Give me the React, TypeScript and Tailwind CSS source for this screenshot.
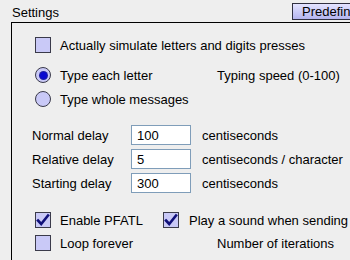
import React from "react";

function Box({ checked }: { checked?: boolean }) {
  return (
    <span className="relative inline-flex h-4 w-4 shrink-0 items-center justify-center border border-[#3a3a4a] bg-[#c9c9f7]">
      {checked && (
        <svg width="14" height="14" viewBox="0 0 14 14" className="absolute">
          <path d="M2 7.5 L5.2 11 L12 2.5" fill="none" stroke="#10107a" strokeWidth="2.6" strokeLinecap="square" />
        </svg>
      )}
    </span>
  );
}

function Radio({ checked }: { checked?: boolean }) {
  return (
    <span className="inline-flex h-4 w-4 shrink-0 items-center justify-center rounded-full border border-[#3a3a4a] bg-[#c9c9f7]">
      {checked && <span className="h-[7px] w-[7px] rounded-full bg-[#0a0ad0] ring-1 ring-[#2020a0]" />}
    </span>
  );
}

function DelayRow({ label, value, unit, cls }: { label: string; value: string; unit: string; cls: string }) {
  return (
    <div className={"flex h-5 items-center whitespace-nowrap " + cls}>
      <span className="w-[119px] shrink-0 pl-5">{label}</span>
      <span className="flex h-5 w-[60px] shrink-0 items-center border border-[#7f9db9] bg-white pl-[5px]">{value}</span>
      <span className="pl-[11px]">{unit}</span>
    </div>
  );
}

export default function App() {
  return (
    <div
      className="relative h-[260px] w-[350px] overflow-hidden whitespace-nowrap bg-[#eeeeee] text-[13px] leading-none text-black"
      style={{ fontFamily: '"Liberation Sans", Arial, sans-serif' }}
    >
      {/* header */}
      <div className="flex h-[22px] items-start">
        <span className="pl-3 pt-[6px]">Settings</span>
        <div className="ml-auto mr-[-12px] mt-[3px] flex h-[17px] w-[70px] shrink-0 items-center border border-[#303040] bg-gradient-to-b from-[#e4e4ff] to-[#b4b4ee] pl-[9px]">
          Predefined
        </div>
      </div>

      {/* panel */}
      <div className="ml-[11px] h-[238px] border-l border-t border-black">
        <div className="ml-[23px] mt-[14px] flex h-4 items-center gap-[9px]">
          <Box />
          <span>Actually simulate letters and digits presses</span>
        </div>

        <div className="ml-[23px] mt-[14px] flex h-4 items-center">
          <Radio checked />
          <span className="w-[166px] shrink-0 pl-[9px]">Type each letter</span>
          <span>Typing speed (0-100)</span>
        </div>
        <div className="ml-[23px] mt-2 flex h-4 items-center gap-[9px]">
          <Radio />
          <span>Type whole messages</span>
        </div>

        <DelayRow label="Normal delay" value="100" unit="centiseconds" cls="mt-[18px]" />
        <DelayRow label="Relative delay" value="5" unit="centiseconds / character" cls="mt-1" />
        <DelayRow label="Starting delay" value="300" unit="centiseconds" cls="mt-1" />

        <div className="ml-[23px] mt-[19px] flex h-4 items-center">
          <Box checked />
          <span className="w-[112px] shrink-0 pl-[9px]">Enable PFATL</span>
          <Box checked />
          <span className="pl-[10px]">Play a sound when sending</span>
        </div>
        <div className="ml-[23px] mt-[7px] flex h-4 items-center">
          <Box />
          <span className="w-[166px] shrink-0 pl-[9px]">Loop forever</span>
          <span>Number of iterations</span>
        </div>
      </div>
    </div>
  );
}
